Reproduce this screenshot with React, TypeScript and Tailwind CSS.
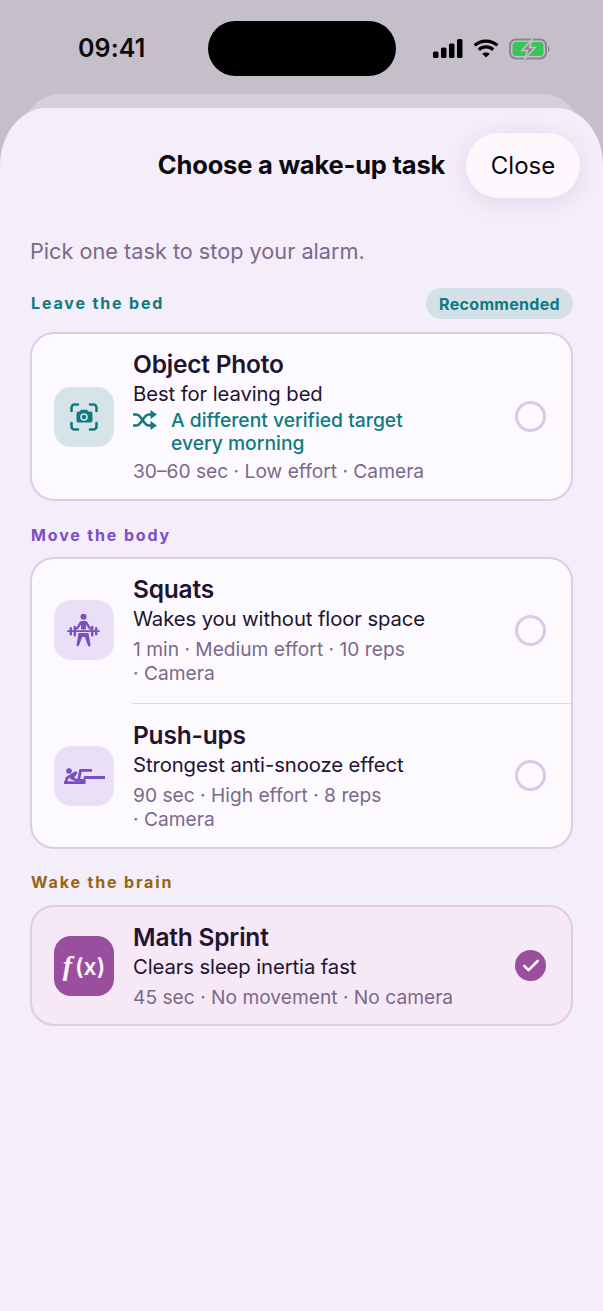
import { Check } from "lucide-react";
import type { ReactNode } from "react";

const FONT = "font-['Inter','Noto_Sans',sans-serif]";

function SignalIcon() {
  return (
    <svg width="30" height="19" viewBox="0 0 30 19" fill="#000">
      <rect x="0" y="12.5" width="5.5" height="6.5" rx="1.6" />
      <rect x="8" y="8.5" width="5.5" height="10.5" rx="1.6" />
      <rect x="16" y="4.5" width="5.5" height="14.5" rx="1.6" />
      <rect x="24" y="0" width="5.5" height="19" rx="1.6" />
    </svg>
  );
}

function WifiIcon() {
  return (
    <svg width="26" height="19" viewBox="0 0 26 19" fill="none" stroke="#000" strokeWidth="3.2">
      <path d="M1.6 6.4 C8 .6 18 .6 24.4 6.4" />
      <path d="M5.8 10.8 C10 7 16 7 20.2 10.8" />
      <path d="M13 18.6 L9.2 14.8 C11.4 13 14.6 13 16.8 14.8 Z" fill="#000" stroke="none" />
    </svg>
  );
}

function BatteryIcon() {
  return (
    <svg width="42" height="22" viewBox="0 0 42 22" fill="none">
      <rect x="1" y="1.5" width="36" height="19" rx="6" stroke="#8b8790" strokeWidth="2" />
      <rect x="3.5" y="4" width="31" height="14" rx="3.5" fill="#35c759" />
      <path d="M39 8 c2 .6 2 5.4 0 6z" fill="#8b8790" />
      <path d="M23.5 1 L13 12.5 H18.5 L15.5 21 L26 9.5 H20.5 Z" fill="#8b8790" stroke="#c4bfc9" strokeWidth="1.6" />
    </svg>
  );
}

function CameraScanIcon() {
  return (
    <svg width="28" height="28" viewBox="0 0 28 28" fill="none" stroke="#0f7a80" strokeWidth="2.6" strokeLinecap="round">
      <path d="M1.5 8 V4.5 a3 3 0 0 1 3 -3 H8" />
      <path d="M20 1.5 h3.5 a3 3 0 0 1 3 3 V8" />
      <path d="M1.5 20 v3.5 a3 3 0 0 0 3 3 H8" />
      <path d="M26.5 20 v3.5 a3 3 0 0 1 -3 3 H20" />
      <path
        fillRule="evenodd"
        stroke="none"
        fill="#0f7a80"
        d="M7.5 8.5 h2.2 l1.2 -1.8 h6.2 l1.2 1.8 h2.2 a2 2 0 0 1 2 2 v7 a2 2 0 0 1 -2 2 h-12 a2 2 0 0 1 -2 -2 v-7 a2 2 0 0 1 2 -2z M14 10.2 a3.8 3.8 0 1 0 0 7.6 a3.8 3.8 0 0 0 0 -7.6z M14 11.8 a2.2 2.2 0 1 1 0 4.4 a2.2 2.2 0 0 1 0 -4.4z"
      />
    </svg>
  );
}

function ShuffleIcon() {
  return (
    <svg width="24" height="20" viewBox="0 0 24 20" fill="none" stroke="#0f7a80" strokeWidth="2.6" className="shrink-0 mt-[1px]">
      <path d="M0 4.5 H3.5 C8.5 4.5 10.5 15.5 15.5 15.5 H19" />
      <path d="M0 15.5 H3.5 C8.5 15.5 10.5 4.5 15.5 4.5 H19" />
      <path d="M17.5 0 L24 4.5 L17.5 9Z" fill="#0f7a80" stroke="none" />
      <path d="M17.5 11 L24 15.5 L17.5 20Z" fill="#0f7a80" stroke="none" />
    </svg>
  );
}

function LifterIcon() {
  return (
    <svg width="34" height="34" viewBox="0 0 34 34" fill="#7a4fc4">
      <circle cx="16.5" cy="3.8" r="3" />
      <path d="M15 8 h3 c1.2 0 2 .5 2.6 1.5 l4.4 7 h-2.8 l-3.2 -5 v5 h-5 v-5 l-3.2 5 h-2.800 l4.400 -7 c.6 -1 1.400 -1.500 2.600 -1.500z" />
      <rect x="0" y="17.2" width="33" height="1.8" rx=".9" />
      <rect x="2.6" y="14" width="2.4" height="8.4" rx="1.2" />
      <rect x="6.6" y="12.8" width="2.4" height="10.6" rx="1.2" />
      <rect x="24" y="12.8" width="2.4" height="10.6" rx="1.2" />
      <rect x="28" y="14" width="2.4" height="8.4" rx="1.2" />
      <path d="M11.5 20 h10 l2 12 a1.300 1.300 0 0 1 -2.600 .4 L17.800 24 h-2.600 L12 32.400 a1.300 1.300 0 0 1 -2.500 -.4z" />
    </svg>
  );
}

function PushupIcon() {
  return (
    <svg width="41" height="16" viewBox="0 0 41 16" fill="none" stroke="#7a4fc4" strokeWidth="2.800">
      <circle cx="5" cy="3" r="2.800" fill="#7a4fc4" stroke="none" />
      <path d="M1.800 15 L3 9.800 L12.500 4.200 L8 10.200 L14.500 13" />
      <path d="M28 2.400 H16.500 L14.500 13" />
      <path d="M0 14.600 H21.500" />
      <path d="M16 12.800 H21.500" strokeWidth="3.400" />
      <path d="M21 9.400 H41" strokeWidth="3" strokeLinecap="round" />
    </svg>
  );
}

function FxIcon() {
  return (
    <span className="flex items-baseline text-[#fbf3fb] text-[23px] font-semibold leading-none">
      <span className="font-['Liberation_Serif',serif] italic font-bold text-[28px] mr-[3px]">f</span>
      (x)
    </span>
  );
}

function Radio({ selected }: { selected?: boolean }) {
  if (selected) {
    return (
      <div className="w-[31px] h-[31px] rounded-full bg-[#9a4f9e] flex items-center justify-center shrink-0">
        <Check className="w-[20px] h-[20px] text-[#fbf3fb]" strokeWidth={3.2} />
      </div>
    );
  }
  return <div className="w-[31px] h-[31px] rounded-full border-[3px] border-[#dcc9e8] shrink-0" />;
}

interface TaskRowProps {
  icon: ReactNode;
  iconBg: string;
  title: string;
  subtitle: string;
  extra?: boolean;
  meta: string;
  selected?: boolean;
  className: string;
}

function TaskRow({ icon, iconBg, title, subtitle, extra, meta, selected, className }: TaskRowProps) {
  return (
    <div className={`flex items-center pl-[22px] pr-[25px] ${className}`}>
      <div className={`w-[60px] h-[60px] rounded-[17px] flex items-center justify-center shrink-0 ${iconBg}`}>{icon}</div>
      <div className="ml-[19px] flex-1 min-w-0">
        <div className="text-[24.5px] leading-[29px] font-semibold text-[#22142f] tracking-[-0.2px]">{title}</div>
        <div className="text-[20.3px] leading-[29px] text-[#22142f] tracking-[-0.1px]">{subtitle}</div>
        {extra && (
          <div className="flex items-start mt-[1px]">
            <ShuffleIcon />
            <div className="ml-[14px] w-[270px] text-[19.3px] leading-[23px] font-medium text-[#0f7a80]">
              A different verified target every morning
            </div>
          </div>
        )}
        <div className="w-[325px] mt-[4px] text-[19.2px] leading-[24px] text-[#7a6a8a]">{meta}</div>
      </div>
      <Radio selected={selected} />
    </div>
  );
}

function SectionLabel({ children, color }: { children: ReactNode; color: string }) {
  return <div className={`pl-px text-[16px] leading-[20px] font-bold tracking-[1.85px] ${color}`}>{children}</div>;
}

export default function App() {
  return (
    <div className={`w-[603px] h-[1311px] overflow-hidden flex flex-col bg-[#c4bfc9] ${FONT}`}>
      {/* status bar */}
      <div className="h-[94px] shrink-0 flex pt-[21px] pl-[78px] pr-[50px]">
        <div className="w-[130px] h-[55px] flex items-center text-[25px] font-semibold text-[#0c0c0e] tracking-[0.1px]">09:41</div>
        <div className="w-[188px] h-[55px] rounded-[28px] bg-black" />
        <div className="flex-1 h-[55px] flex items-center pl-[37px] gap-[10px]">
          <SignalIcon />
          <WifiIcon />
          <BatteryIcon />
        </div>
      </div>

      {/* sheet behind */}
      <div className="h-[60px] -mb-[46px] mx-[24px] shrink-0 rounded-t-[36px] bg-[#d6d0dc]" />

      {/* sheet */}
      <div className="relative flex-1 rounded-tl-[46px_58px] rounded-tr-[46px_58px] bg-[#f4edfa]">
        <div className="relative h-[129px] pt-[25px]">
          <div className="h-[65px] flex items-center justify-center text-[25.5px] font-bold text-[#0c0a10] tracking-[-0.2px]">
            Choose a wake-up task
          </div>
          <div className="absolute right-[23px] top-[25px] w-[114px] h-[65px] rounded-[33px] bg-[#fdf8fe] shadow-[0_4px_24px_rgba(60,40,90,0.1)] flex items-center justify-center text-[24px] text-[#0c0a10]">
            Close
          </div>
        </div>

        <div className="pl-[30px] pr-[30px]">
          <div className="text-[21.7px] leading-[28px] text-[#7a6a8a]">Pick one task to stop your alarm.</div>

          <div className="mt-[23px] flex items-center justify-between h-[31px]">
            <div className="pb-[2px]">
              <SectionLabel color="text-[#0f7a80]">Leave the bed</SectionLabel>
            </div>
            <div className="h-[31px] w-[147px] rounded-full bg-[#d3e0e8] flex items-center justify-center text-[16px] font-bold text-[#0f7a80] tracking-[0.3px]">
              Recommended
            </div>
          </div>
          <div className="mt-[13px] border-2 border-[#dccce9] rounded-[24px] bg-[#fdfaff] overflow-hidden">
            <TaskRow
              className="h-[165px]"
              icon={<CameraScanIcon />}
              iconBg="bg-[#d6e4ea]"
              title="Object Photo"
              subtitle="Best for leaving bed"
              extra
              meta="30–60 sec · Low effort · Camera"
            />
          </div>

          <div className="mt-[24px]">
            <SectionLabel color="text-[#7a4fc4]">Move the body</SectionLabel>
          </div>
          <div className="mt-[12px] border-2 border-[#dccce9] rounded-[24px] bg-[#fdfaff] overflow-hidden">
            <TaskRow
              className="h-[144px] pb-[2px]"
              icon={<LifterIcon />}
              iconBg="bg-[#e9dff7]"
              title="Squats"
              subtitle="Wakes you without floor space"
              meta={"1 min · Medium effort · 10 reps ·\u00a0Camera"}
            />
            <div className="ml-[100px] h-px bg-[#ddd8e2]" />
            <TaskRow
              className="h-[143px]"
              icon={<PushupIcon />}
              iconBg="bg-[#e9dff7]"
              title="Push-ups"
              subtitle="Strongest anti-snooze effect"
              meta={"90 sec · High effort · 8 reps ·\u00a0Camera"}
            />
          </div>

          <div className="mt-[23px]">
            <SectionLabel color="text-[#96660f]">Wake the brain</SectionLabel>
          </div>
          <div className="mt-[13px] border-2 border-[#dccce9] rounded-[24px] bg-[#f6e8f7] overflow-hidden">
            <TaskRow
              className="h-[117px]"
              icon={<FxIcon />}
              iconBg="bg-[#9a4f9e]"
              title="Math Sprint"
              subtitle="Clears sleep inertia fast"
              meta="45 sec · No movement · No camera"
              selected
            />
          </div>
        </div>
      </div>
    </div>
  );
}
